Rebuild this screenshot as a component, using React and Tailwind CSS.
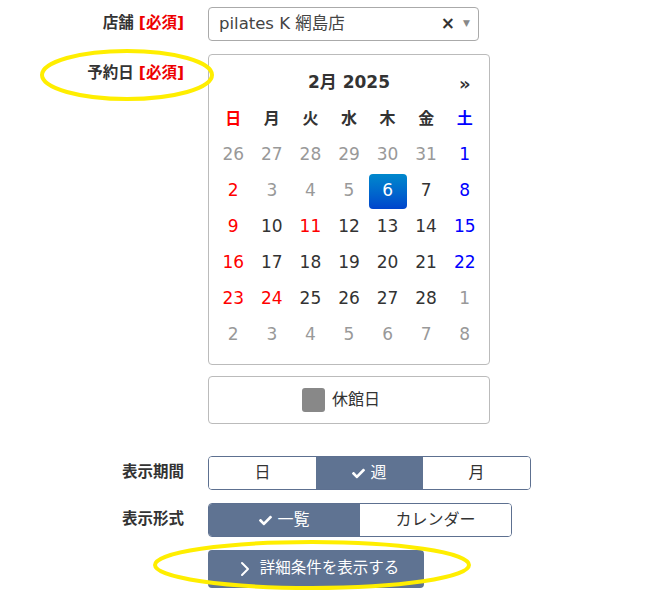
import { FaCheck } from "react-icons/fa";
import { ChevronRight } from "lucide-react";

const latin = { fontFamily: '"DejaVu Sans", "Noto Sans CJK JP", sans-serif' };

const weeks = [
  [["26", "o"], ["27", "o"], ["28", "o"], ["29", "o"], ["30", "o"], ["31", "o"], ["1", "sat"]],
  [["2", "sun"], ["3", "o"], ["4", "o"], ["5", "o"], ["6", "sel"], ["7", "n"], ["8", "sat"]],
  [["9", "sun"], ["10", "n"], ["11", "sun"], ["12", "n"], ["13", "n"], ["14", "n"], ["15", "sat"]],
  [["16", "sun"], ["17", "n"], ["18", "n"], ["19", "n"], ["20", "n"], ["21", "n"], ["22", "sat"]],
  [["23", "sun"], ["24", "sun"], ["25", "n"], ["26", "n"], ["27", "n"], ["28", "n"], ["1", "o"]],
  [["2", "o"], ["3", "o"], ["4", "o"], ["5", "o"], ["6", "o"], ["7", "o"], ["8", "o"]],
];

const dayColor = {
  o: "text-[#999]",
  sun: "text-[#ff0000]",
  sat: "text-[#0000ff]",
  n: "text-[#333]",
  sel: "text-white bg-gradient-to-b from-[#0088cc] to-[#0044cc] rounded-[4px]",
};

function Label({ children, req }) {
  return (
    <div className="w-[185px] shrink-0 text-right font-bold text-[15.5px] text-[#333] pr-[1px]">
      {children}
      {req && <span className="text-[#ee0000] ml-[5px]">[必須]</span>}
    </div>
  );
}

function Segmented({ items, widths }) {
  return (
    <div className="flex border border-[#5d7090] rounded-[4px] overflow-hidden">
      {items.map((it, i) => (
        <div
          key={it.label}
          style={{ width: widths[i] }}
          className={
            "h-[32px] flex items-center justify-center gap-[5px] text-[16px] " +
            (it.active ? "bg-[#5f7392] text-white" : "bg-white text-[#333]") +
            (i > 0 && !it.active && !items[i - 1].active ? " border-l border-[#5d7090]" : "")
          }
        >
          {it.active && <FaCheck size={13} />}
          {it.label}
        </div>
      ))}
    </div>
  );
}

export default function App() {
  return (
    <div className="relative w-[651px] h-[602px] bg-white text-[#333]" style={latin}>
      <div className="flex flex-col pt-[7px]">
        {/* store */}
        <div className="flex items-center">
          <Label req>店舗</Label>
          <div className="ml-[23px] w-[271px] h-[34px] border border-[#aaa] rounded-[4px] flex items-center pl-[10px] pr-[8px]">
            <span className="text-[16.5px] text-[#444] flex-1">pilates K 網島店</span>
            <span className="text-[17px] text-[#333] font-bold mr-[8px]">×</span>
            <span className="text-[9px] text-[#888]">▼</span>
          </div>
        </div>

        {/* date */}
        <div className="flex mt-[13px]">
          <div className="pt-[8px]">
            <Label req>予約日</Label>
          </div>
          <div className="ml-[23px] flex flex-col">
            <div className="w-[282px] h-[311px] border border-[#bbb] rounded-[4px] px-[5px] pt-[10px]">
              <div className="grid grid-cols-7 w-[270px]">
                <div />
                <div className="col-span-5 h-[36px] flex items-center justify-center font-bold text-[17px]">2月 2025</div>
                <div className="h-[36px] flex items-center justify-center font-bold text-[18px]">»</div>
                {["日", "月", "火", "水", "木", "金", "土"].map((d, i) => (
                  <div
                    key={d}
                    className={
                      "h-[36px] flex items-center justify-center font-bold text-[16px] " +
                      (i === 0 ? "text-[#ff0000]" : i === 6 ? "text-[#0000ff]" : "text-[#333]")
                    }
                  >
                    {d}
                  </div>
                ))}
                {weeks.flat().map(([n, t], i) => (
                  <div key={i} className="h-[36px] flex items-center justify-center">
                    <div className={"w-[38px] h-[35px] flex items-center justify-center text-[17px] " + dayColor[t]}>{n}</div>
                  </div>
                ))}
              </div>
            </div>
            <div className="mt-[11px] w-[282px] h-[48px] border border-[#bbb] rounded-[4px] flex items-center justify-center gap-[7px] pr-[16px]">
              <div className="w-[23px] h-[24px] bg-[#888] rounded-[3px]" />
              <span className="text-[16px] text-[#333]">休館日</span>
            </div>
          </div>
        </div>

        {/* period */}
        <div className="flex items-center mt-[32px]">
          <Label>表示期間</Label>
          <div className="ml-[23px]">
            <Segmented
              widths={[107, 107, 107]}
              items={[{ label: "日" }, { label: "週", active: true }, { label: "月" }]}
            />
          </div>
        </div>

        {/* format */}
        <div className="flex items-center mt-[13px]">
          <Label>表示形式</Label>
          <div className="ml-[23px]">
            <Segmented widths={[151, 151]} items={[{ label: "一覧", active: true }, { label: "カレンダー" }]} />
          </div>
        </div>

        <div className="flex mt-[13px]">
          <div className="w-[185px]" />
          <button className="ml-[23px] w-[216px] h-[38px] bg-[#5f7392] rounded-[4px] text-white text-[15.5px] flex items-center justify-center gap-[3px]">
            <ChevronRight size={24} strokeWidth={2} />
            詳細条件を表示する
          </button>
        </div>
      </div>

      {/* annotation marks */}
      <svg className="absolute inset-0 pointer-events-none" width="651" height="602">
        <ellipse cx="127" cy="75" rx="85" ry="24" fill="none" stroke="#ffee00" strokeWidth="4" />
        <ellipse cx="312" cy="565" rx="157" ry="23" fill="none" stroke="#ffee00" strokeWidth="4" />
      </svg>
    </div>
  );
}
